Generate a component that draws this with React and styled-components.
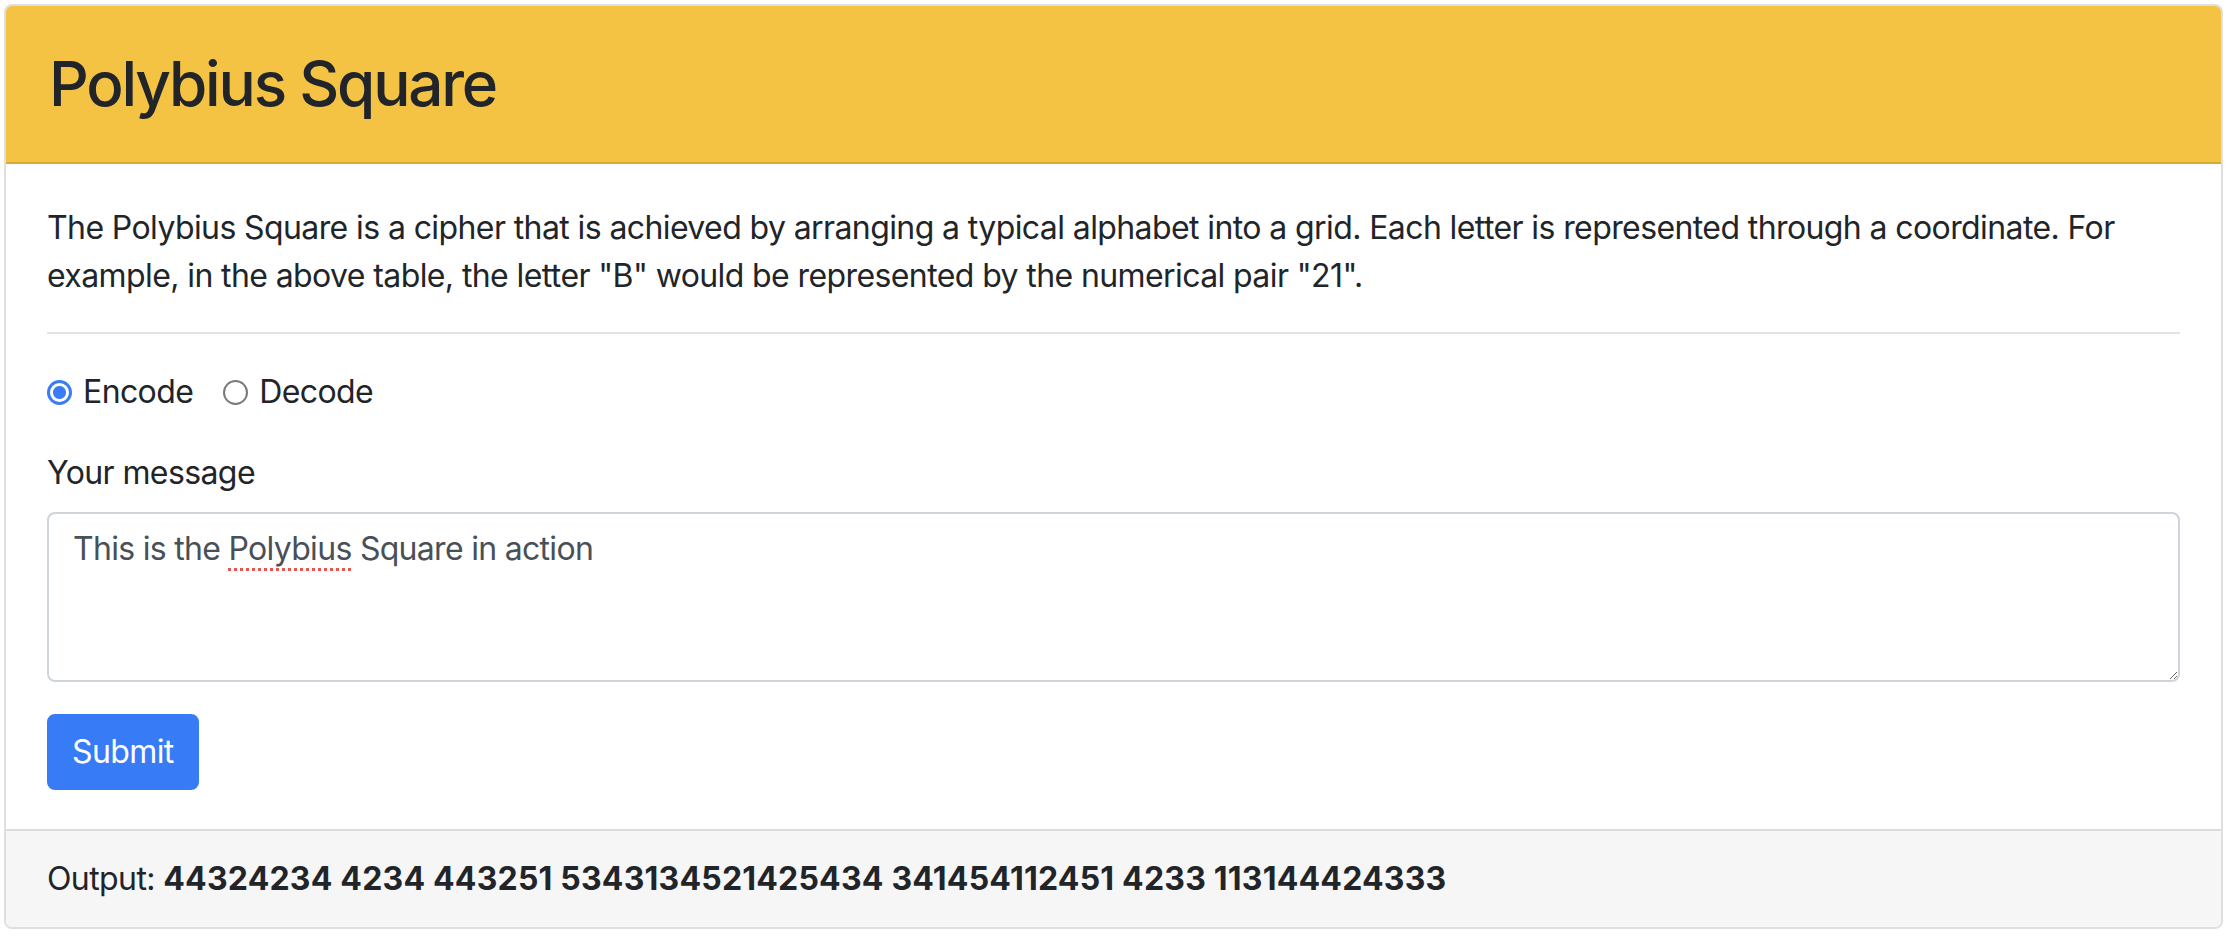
import React from 'react';
import styled, { createGlobalStyle } from 'styled-components';

const GlobalStyle = createGlobalStyle`
    html, body {
        margin: 0;
        padding: 0;
        background: #ffffff;
    }
    body {
        font-family: Inter, "Noto Sans", "Liberation Sans", sans-serif;
        color: #212529;
    }
`

const Page = styled.div`
    padding: 4px 5px 5px 4px;
`
const Card = styled.div`
    border: 2px solid #dfdfdf;
    border-radius: 8px;
    overflow: hidden;
    background-color: white;
`
const CardHeader = styled.div`
    background-color: #f5c344;
    border-bottom: 2px solid #d6ab33;
    padding: 40px 43px 40px;
`
const Title = styled.h1`
    margin: 0;
    font-size: 62px;
    font-weight: 500;
    line-height: 76px;
    letter-spacing: -2.2px;
    color: #212529;
`
const CardBody = styled.div`
    padding: 40px 41px 39px 41px;
`
const Paragraph = styled.p`
    margin: 0 0 32px;
    font-size: 32px;
    line-height: 48px;
    letter-spacing: -0.6px;
`
const Divider = styled.hr`
    margin: 0 0 34px;
    border: none;
    border-top: 2px solid #e4e4e4;
`
const RadioRow = styled.div`
    display: flex;
    align-items: center;
    gap: 30px;
    margin-bottom: 33px;
`
const RadioLabel = styled.label`
    display: flex;
    align-items: center;
    gap: 11px;
    font-size: 32px;
    line-height: 48px;
    letter-spacing: -0.6px;
`
const Radio = styled.span`
    box-sizing: border-box;
    width: 25px;
    height: 25px;
    border-radius: 50%;
    border: ${p => p.$checked ? '3px solid #3a7cf6' : '2px solid #7a7a7a'};
    background: ${p => p.$checked
        ? 'radial-gradient(circle, #3a7cf6 0 6px, #ffffff 7px)'
        : '#ffffff'};
`
const FieldLabel = styled.div`
    font-size: 32px;
    line-height: 48px;
    letter-spacing: -0.6px;
    margin-bottom: 15px;
`
const MessageBox = styled.div`
    box-sizing: border-box;
    height: 170px;
    padding: 11px 24px;
    border: 2px solid #ced4da;
    border-radius: 8px;
    font-size: 32px;
    line-height: 48px;
    letter-spacing: -0.7px;
    color: #495057;
    overflow: auto;
    resize: both;
    margin-bottom: 32px;
`
const Misspelled = styled.span`
    text-decoration: underline dotted #e8544e;
    text-decoration-thickness: 3px;
    text-underline-offset: 8px;
`
const SubmitButton = styled.button`
    display: block;
    font-family: inherit;
    font-size: 32px;
    line-height: 48px;
    letter-spacing: -0.6px;
    color: white;
    background-color: #377cf6;
    border: 2px solid #377cf6;
    border-radius: 8px;
    padding: 12px 23px;
    cursor: pointer;
`
const CardFooter = styled.div`
    background-color: #f6f6f6;
    border-top: 2px solid #dcdcdc;
    padding: 24px 41px;
    font-size: 32px;
    line-height: 48px;
    letter-spacing: -0.6px;
`
const Output = styled.strong`
    font-weight: 700;
    letter-spacing: 0.2px;
`

function App() {
    return (
        <>
            <GlobalStyle />
            <Page>
                <Card>
                    <CardHeader>
                        <Title>Polybius Square</Title>
                    </CardHeader>
                    <CardBody>
                        <Paragraph>
                            The Polybius Square is a cipher that is achieved by arranging a typical alphabet into a grid. Each letter is represented through a coordinate. For example, in the above table, the letter "B" would be represented by the numerical pair "21".
                        </Paragraph>
                        <Divider />
                        <RadioRow>
                            <RadioLabel>
                                <Radio $checked />
                                Encode
                            </RadioLabel>
                            <RadioLabel>
                                <Radio />
                                Decode
                            </RadioLabel>
                        </RadioRow>
                        <FieldLabel>Your message</FieldLabel>
                        <MessageBox>
                            This is the <Misspelled>Polybius</Misspelled> Square in action
                        </MessageBox>
                        <SubmitButton>Submit</SubmitButton>
                    </CardBody>
                    <CardFooter>
                        Output: <Output>44324234 4234 443251 5343134521425434 341454112451 4233 113144424333</Output>
                    </CardFooter>
                </Card>
            </Page>
        </>
    )
}

export default App
